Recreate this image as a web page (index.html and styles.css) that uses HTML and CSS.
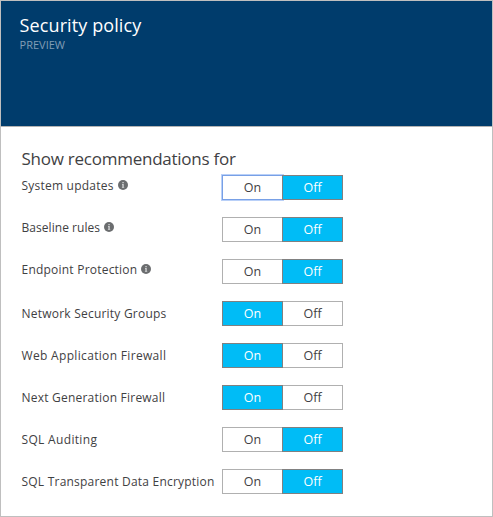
FILE: index.html
```
<!DOCTYPE html>
<html lang="en">
<head>
<meta charset="utf-8">
<title>Security policy</title>
<link rel="stylesheet" href="styles.css">
</head>
<body>
<main class="blade">
  <header class="blade-header">
    <h1 class="title">Security policy</h1>
    <p class="subtitle">PREVIEW</p>
  </header>
  <section class="content">
    <h2 class="heading">Show recommendations for</h2>
    <div class="row has-info"><span class="label">System updates</span><svg class="info" viewBox="0 0 10 10"><circle cx="5" cy="5" r="5"/><path d="M4.4 2h1.3v1.3H4.4zM4 4h1.7v3h.5v.8H3.9V7h.5V4.8H4z"/></svg><div class="toggle"><span class="option focused">On</span><span class="option selected">Off</span></div></div>
    <div class="row has-info"><span class="label tight">Baseline rules</span><svg class="info" viewBox="0 0 10 10"><circle cx="5" cy="5" r="5"/><path d="M4.4 2h1.3v1.3H4.4zM4 4h1.7v3h.5v.8H3.9V7h.5V4.8H4z"/></svg><div class="toggle"><span class="option">On</span><span class="option selected">Off</span></div></div>
    <div class="row has-info"><span class="label">Endpoint Protection</span><svg class="info" viewBox="0 0 10 10"><circle cx="5" cy="5" r="5"/><path d="M4.4 2h1.3v1.3H4.4zM4 4h1.7v3h.5v.8H3.9V7h.5V4.8H4z"/></svg><div class="toggle"><span class="option">On</span><span class="option selected">Off</span></div></div>
    <div class="row"><span class="label">Network Security Groups</span><div class="toggle"><span class="option selected">On</span><span class="option">Off</span></div></div>
    <div class="row"><span class="label wide">Web Application Firewall</span><div class="toggle"><span class="option selected">On</span><span class="option">Off</span></div></div>
    <div class="row"><span class="label">Next Generation Firewall</span><div class="toggle"><span class="option selected">On</span><span class="option">Off</span></div></div>
    <div class="row"><span class="label wide">SQL Auditing</span><div class="toggle"><span class="option">On</span><span class="option selected">Off</span></div></div>
    <div class="row"><span class="label">SQL Transparent Data Encryption</span><div class="toggle"><span class="option">On</span><span class="option selected">Off</span></div></div>
  </section>
</main>
</body>
</html>
```

FILE: styles.css
```
* { box-sizing: border-box; }
body {
  margin: 0;
  background: #fff;
  color: #3f4143;
  font-family: "Open Sans", "Noto Sans", sans-serif;
}
.blade {
  width: 493px;
  height: 517px;
  border: 1px solid #bfbfbf;
  overflow: hidden;
}
.blade-header {
  height: 126px;
  padding: 12px 18.6px;
  background: #003c6c;
  border-bottom: 1px solid #b3b3b3;
}
.title {
  margin: 0;
  font-size: 18px;
  line-height: 24px;
  font-weight: 400;
  letter-spacing: .1px;
  color: #fff;
  white-space: nowrap;
}
.subtitle {
  margin: 0;
  padding-top: 1px;
  font-size: 11px;
  line-height: 14px;
  color: #809db5;
}
.content { padding: 20px 21px 0 20.5px; }
.heading {
  margin: 0;
  height: 28px;
  font-size: 17px;
  line-height: 23px;
  font-weight: 400;
  letter-spacing: -.25px;
  white-space: nowrap;
}
.row {
  display: flex;
  width: 321.5px;
  height: 25px;
  margin-bottom: 17px;
  font-size: 12px;
}
.label {
  line-height: 25px;
  letter-spacing: .22px;
  white-space: nowrap;
}
.label.tight { letter-spacing: .05px; }
.label.wide { letter-spacing: .33px; }
.has-info .label { line-height: 21px; }
.info {
  width: 10px;
  height: 10px;
  margin: 5px 0 0 4px;
  fill: #6b6d6f;
}
.info path { fill: #d8d9da; }
.toggle {
  display: flex;
  width: 121px;
  margin-left: auto;
}
.option {
  width: 61px;
  height: 25px;
  border: 1px solid #b0b0b0;
  font-size: 12.5px;
  line-height: 24px;
  text-align: center;
}
.option + .option { margin-left: -1px; }
.option.selected {
  position: relative;
  background: #00bcf6;
  border-color: #808080;
  color: #fff;
}
.option.focused {
  border-color: #78a0e6;
  box-shadow: 0 0 0 1px #b9d0f8;
}
```
